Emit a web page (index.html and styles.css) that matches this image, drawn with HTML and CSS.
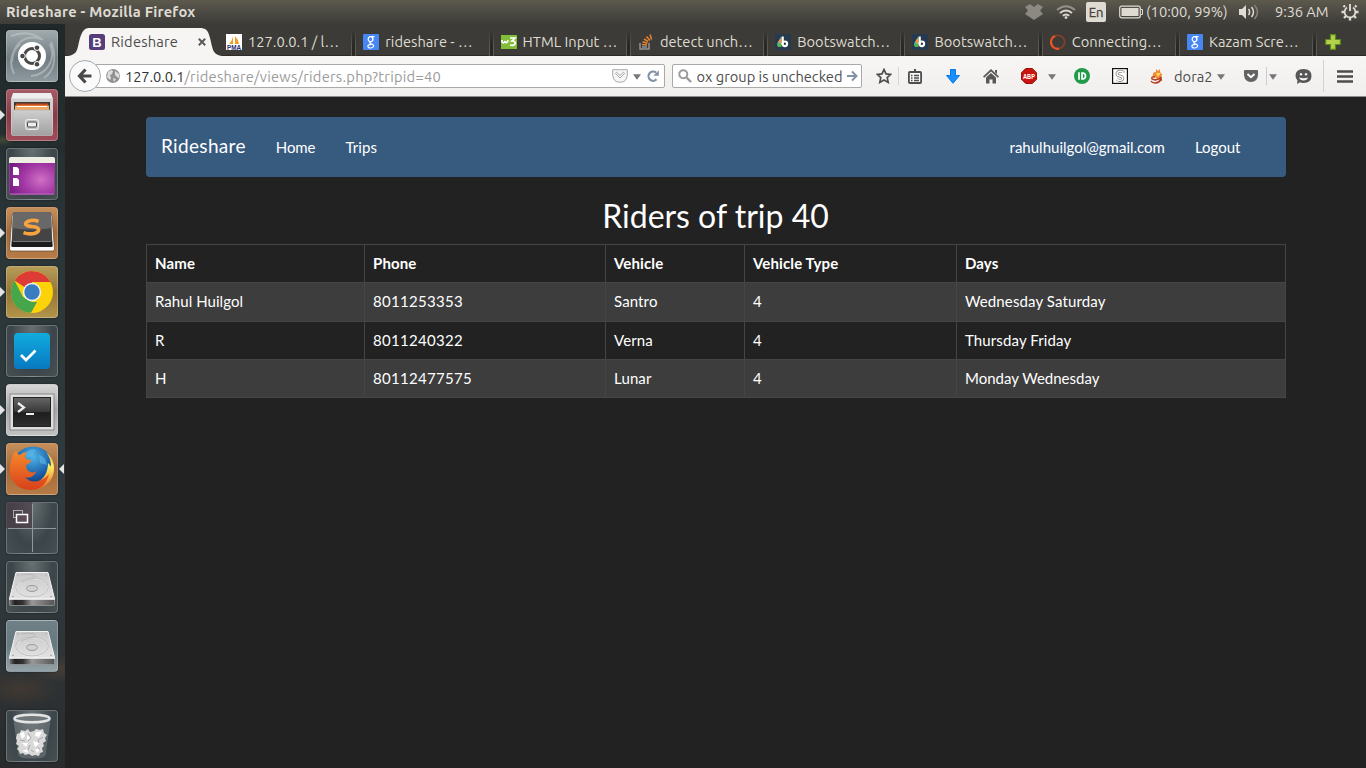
FILE: index.html
```html
<!DOCTYPE html>
<html lang="en">
<head>
<meta charset="utf-8">
<title>Rideshare</title>
<link rel="stylesheet" href="styles.css">
</head>
<body>
<svg class="defs" width="0" height="0" aria-hidden="true">
  <defs>
    <linearGradient id="silver" x2="0" y2="1"><stop offset="0" stop-color="#cfcfcf"/><stop offset="1" stop-color="#a0a0a0"/></linearGradient>
    <linearGradient id="plate" x2="0" y2="1"><stop offset="0" stop-color="#c9c9c9"/><stop offset="1" stop-color="#e2e2e2"/></linearGradient>
    <linearGradient id="ink" x2="0" y2="1"><stop offset="0" stop-color="#666"/><stop offset=".5" stop-color="#383838"/><stop offset=".52" stop-color="#1d1d1d"/><stop offset="1" stop-color="#303030"/></linearGradient>
    <linearGradient id="edge"><stop offset="0" stop-color="#777"/><stop offset=".12" stop-color="#222"/><stop offset=".3" stop-color="#333"/><stop offset=".5" stop-color="#999"/><stop offset="1" stop-color="#555"/></linearGradient>
    <radialGradient id="purple" cx=".7" cy=".6" r=".8"><stop offset="0" stop-color="#cf6fc4"/><stop offset=".5" stop-color="#a338a5"/><stop offset="1" stop-color="#711a80"/></radialGradient>
    <radialGradient id="globe" cx=".5" cy=".25" r=".75"><stop offset="0" stop-color="#4fb5e8"/><stop offset=".6" stop-color="#1b5fa8"/><stop offset="1" stop-color="#0b2f69"/></radialGradient>
    <linearGradient id="flame" x2="0" y2="1"><stop offset="0" stop-color="#f58a2c"/><stop offset="1" stop-color="#d8401b"/></linearGradient>
    <linearGradient id="tail" x2="0" y2="1"><stop offset="0" stop-color="#f7b53b"/><stop offset=".4" stop-color="#fdec62"/><stop offset="1" stop-color="#e8641f"/></linearGradient>
    <linearGradient id="tick" x2="0" y2="1"><stop offset="0" stop-color="#11acdf"/><stop offset="1" stop-color="#0878c0"/></linearGradient>
    <symbol id="google" viewBox="0 0 16 16"><rect width="16" height="16" rx="1" fill="#4787f3"/><g fill="none" stroke="#fff" stroke-width="1.200"><ellipse cx="7.500" cy="5.200" rx="2.300" ry="2.500"/><path d="M8 2.600h3.500M9.700 3.500v3.300M7.300 7.800q-1.200 1 .5 1.700 3 1 2.800 2.500-.4 2-3.200 2-2.600 0-2.500-1.900.2-1.700 3.400-1.800"/></g></symbol>
    <symbol id="swatch" viewBox="0 0 16 16"><rect width="16" height="16" fill="#25394f"/><path d="M6 3v9H4Q2 12 2 9.500z" fill="#39b5d8"/><path d="M6.500 3v8L3 8z" fill="#f29a37"/><path d="M2 10l4.500-1v4H4q-2 0-2-3" fill="#55b949"/><path d="M7.700 2.500v7.500" stroke="#fff" stroke-width="2.200"/><circle cx="9.800" cy="9.800" r="2.300" fill="none" stroke="#fff" stroke-width="2.200"/></symbol>
    <symbol id="drive" viewBox="0 0 52 52"><path d="M10 11.500h32l6.500 26h-45z" fill="url(#plate)" stroke="#f2f2f2"/><path d="M3.500 38h45v5.500q0 1-1 1h-43q-1 0-1-1z" fill="url(#edge)" stroke="#999" stroke-width=".8"/><path d="M3 38h46" stroke="#f8f8f8" stroke-width="1.400"/><ellipse cx="26" cy="27" rx="16.500" ry="9.500" fill="none" stroke="#f0f0f0"/><ellipse cx="26" cy="26.500" rx="16.500" ry="9.500" fill="none" stroke="#b8b8b8" stroke-width=".8"/><path d="M15 14q13-2 14 1c0 3-9 3-14 6" fill="none" stroke="#b8b8b8"/><ellipse cx="26" cy="27.500" rx="5.500" ry="3" fill="#d2d2d2" stroke="#999"/><g fill="#999"><circle cx="7" cy="35.500" r=".8"/><circle cx="45" cy="35.500" r=".8"/><circle cx="12" cy="14" r=".6"/><circle cx="40" cy="14" r=".6"/></g></symbol>
    <symbol id="caret" viewBox="0 0 8 6"><path d="M0 .3h8L4 5.700z" fill="#777"/></symbol>
  </defs>
</svg>

<div class="desktop">
  <header class="panel">
    <span class="window-title">Rideshare - Mozilla Firefox</span>
    <div class="indicators">
      <svg class="dropbox" width="18" height="16" viewBox="0 0 18 16"><path d="M5 0 9 3l4-3 5 3-3 3.500L18 10l-3 2-6 4-6-4-3-2 3-3.500L0 3z" fill="#8b8982"/></svg>
      <svg class="wifi" width="20" height="14" viewBox="0 0 20 14"><g fill="none" stroke="#dfdbd2" stroke-width="1.900"><path d="M1 5Q10-2.600 19 5" stroke="#918f86"/><path d="M4 8q6-5 12 0"/><path d="M6.800 10.800q3.200-2.600 6.400 0"/></g><circle cx="10" cy="12.600" r="1.400" fill="#dfdbd2"/></svg>
      <span class="lang">En</span>
      <svg class="battery" width="24" height="14" viewBox="0 0 24 14"><rect x=".7" y="1.200" width="20.600" height="11.600" rx="2" fill="none" stroke="#dfdbd2" stroke-width="1.200"/><rect x="2.500" y="3" width="17" height="8" fill="#dfdbd2"/><path d="M22 4.500h1.500v5H22" fill="none" stroke="#dfdbd2"/></svg>
      <span class="charge">(10:00, 99%)</span>
      <svg class="volume" width="20" height="16" viewBox="0 0 20 16"><path d="M0 5h3l4-4v14l-4-4H0z" fill="#dfdbd2"/><g fill="none" stroke="#dfdbd2" stroke-width="1.500"><path d="M9.500 5q2.200 3 0 6M12.500 3q4 5 0 10"/><path d="M15.500 1q6 7 0 14" stroke="#85837a"/></g></svg>
      <span class="clock">9:36 AM</span>
      <svg class="gear" width="18" height="18" viewBox="-9 -9 18 18"><g fill="none" stroke="#dfdbd2"><path d="M-3-4.500A5.400 5.400 0 1 0 3-4.500" stroke-width="1.800"/><path d="M0-8V-1" stroke-width="1.900"/><path d="M-5-5-6.500-6.500M5-5 6.500-6.500M-5.500 0H-8.500M5.500 0h3M-4 4-6 6M4 4 6 6M0 5.500V8.500" stroke-width="2.400"/></g></svg>
    </div>
  </header>

  <aside class="dock">
    <div class="tile ash"><svg viewBox="0 0 52 52"><g fill="none" stroke="#c4cacc" stroke-width="2" opacity=".55"><path d="M6 32C7 12 20 4 35 9M44 14c7 16-4 31-19 32M5 6q18-7 32 4M45 12c7 17 2 30-7 36M8 44Q0 27 14 14"/></g><circle cx="26" cy="26" r="14" fill="#fff"/><circle cx="26" cy="26" r="7.500" fill="none" stroke="#46484a" stroke-width="3"/><g fill="#46484a" stroke="#fff"><circle cx="16.500" cy="26" r="2.800"/><circle cx="31" cy="17.700" r="2.800"/><circle cx="31" cy="34.300" r="2.800"/></g></svg></div>
    <div class="tile red running"><svg viewBox="0 0 52 52"><path d="M7 4h38l2 6H5z" fill="#eee"/><path d="M5 9.500h42V45H5z" fill="#cfcfcf"/><path d="M8 13h36v9H8z" fill="#3f3836"/><path d="M10 14.500h32v3H10z" fill="#c94b1c"/><path d="M9 16.500h34V21H9z" fill="#f3a861"/><path d="M11 17.500h30" stroke="#fff"/><path d="M7 21h38l1.500 24q0 1.500-1.500 1.500H7Q5.500 46.500 5.500 45z" fill="url(#silver)" stroke="#b5b5b5" stroke-width=".8"/><rect x="19.500" y="30.500" width="13" height="10" rx="2" fill="#c5c5c5" stroke="#ececec"/><rect x="21.500" y="33" width="9" height="5" rx="1" fill="#eee" stroke="#444"/></svg></div>
    <div class="tile dark"><svg viewBox="0 0 52 52"><rect x="3.500" y="9.500" width="45" height="37" rx="2" fill="url(#purple)" stroke="#8c3e97"/><path d="M3 11q0-2 2-2h42q2 0 2 2v4H3z" fill="#efeee3"/><path d="M7 19h4l2 2v6H7zM7 30h4l2 2v6H7z" fill="#fff"/><path d="M4 46h44" stroke="#b66fbe"/></svg></div>
    <div class="tile copper running"><svg viewBox="0 0 52 52"><path d="M8 6h36q1.500 0 2 3l2.500 33q0 2-2 2h-41q-2 0-2-2L6 9q.5-3 2-3" fill="#fafafa" stroke="#61452e" stroke-width=".7"/><path d="M9 5h34q2 0 2 2l1.500 32q0 1-1.500 1H7q-1.500 0-1.500-1L7 7q0-2 2-2" fill="#444"/><path d="M9 5h34q2 0 2 2l.7 14q-19 3-39.400 0L7 7q0-2 2-2" fill="#686868"/><path d="M6 34h40l.5 5q0 1-1.500 1H7q-1.500 0-1.500-1z" fill="#1c1c1c"/><path d="M7 34.500h38" stroke="#777"/><path d="M32.500 14.500q-5-2.300-10-.3c-5 2.300-3.500 4.500 3.500 5.300 8 .7 8.500 4.500 3 6.800q-5.500 1.500-11.500-.7" fill="none" stroke="#f9a33f" stroke-width="3.600"/></svg></div>
    <div class="tile gold running"><svg viewBox="0 0 52 52"><circle cx="26" cy="26" r="21" fill="#fcd209"/><path d="M26 26 8.500 14.500A21 21 0 0 1 44.400 16H26z" fill="#dc3c35"/><path d="M8.500 14.500 17 31 26 36l-2 11A21 21 0 0 1 8.500 14.500" fill="#45a64b"/><path d="M17 31Q20 37 26 36h5L25 47 15 33z" fill="#45a64b"/><circle cx="26" cy="26" r="9.200" fill="#eef3f8"/><circle cx="26" cy="26" r="7.700" fill="#397cc0"/></svg></div>
    <div class="tile dark"><svg viewBox="0 0 52 52"><rect x="8" y="8" width="36" height="36" rx="4" fill="url(#tick)"/><path d="m15 30 5 5 9.500-9.500" fill="none" stroke="#fff" stroke-width="2.700"/></svg></div>
    <div class="tile pale running"><svg viewBox="0 0 52 52"><path d="M4 10h44v36H4z" fill="#dedede" stroke="#888"/><rect x="7.500" y="13.500" width="37" height="29" fill="url(#ink)" stroke="#222"/><path d="m12 19 6 4.500-6 4.500M20 30h8" fill="none" stroke="#eee" stroke-width="2.200"/></svg></div>
    <div class="tile copper running focused"><svg viewBox="0 0 52 52"><circle cx="27" cy="24" r="20.500" fill="url(#globe)"/><path d="M20 9q6-4 10-2l-3 5-7 3zM33 12q7 2 8 10l-7-2z" fill="#62c0e9" opacity=".55"/><path d="M40 9c12 9 11 29-5 36-13 4-20-3-20-3 20 1 27-10 27-22q2 2 3 4 0-9-5-15" fill="url(#tail)"/><path d="M6 15q1-5 4-7 1 3 4 4 3-3 7-3-3 4-1 7l5 1q0 3-5 5 0 5 4 7c4 1 5 0 7-1l-3 4q-4 4-9 2 7 8 18 2 4-2 6-5Q39 47 24 47 8 46 4 31 3 22 6 15" fill="url(#flame)"/></svg></div>
    <div class="tile dark"><svg viewBox="0 0 52 52"><path d="M0 0h26v26H0z" fill="#4d3d48" opacity=".7"/><path d="M26.500 2v48M2 26.500h48" stroke="#92999b"/><rect x="7.500" y="8.500" width="9" height="7" fill="none" stroke="#aaa"/><rect x="10.500" y="12.500" width="11" height="8" fill="#5d4c58" stroke="#fff" stroke-width="1.500"/></svg></div>
    <div class="tile dark"><svg><use href="#drive"/></svg></div>
    <div class="tile steel"><svg><use href="#drive"/></svg></div>
    <div class="tile dark trash"><svg viewBox="0 0 52 52"><path d="M8 9h36l-5 36q-1 3-13 3t-13-3z" fill="#a0a7aa" opacity=".3" stroke="#bbb"/><path d="m11 24 3-1 1-3 4 1 3-2 2 3 4-1 2-2 4 1 3-1 1 4 3 2-2 3 1 3-3 2 1 3-2 2 1 4-3 1-1 3-4-1-3 1-3-2-4 1-2-2-3 1-1-3-2-2 2-3-3-2 1-3-1-3z" fill="#d9d9d9"/><path d="m14 23 4-1 1 4-3 3zM30 22l6 0-3 5-4-1zM16 33l6 0-2 4zM27 31l7 2-5 4zM16 41l5-2 1 4zM29 39l6 0-4 4zM21 25l4 3-4 2z" fill="#fff"/><path d="m22 23 3 5-3 3M37 27l-5 3 1 3M24 35l-2 5M32 37l2 3M14 30l5 1M25 40l3 2" stroke="#aaa" fill="none"/><ellipse cx="26" cy="8.500" rx="17.500" ry="3.800" fill="#70777a" stroke="#e4e4e4" stroke-width="2.500"/></svg></div>
  </aside>

  <div class="browser">
    <nav class="tabs">
      <div class="tab active">
        <svg class="tab-shape" width="152" height="32" viewBox="0 0 152 32"><path d="M0 32C14 32 12 24 15 14 18 5 20 4 26 4H134C141 4 143 6 145 14 148 25 147 32 160 32z" fill="#f6f5f4"/></svg>
        <svg class="fav" viewBox="0 0 16 16"><rect width="16" height="16" rx="2.500" fill="#563d7c"/><text x="8" y="12.800" class="fav-b">B</text></svg>
        <span>Rideshare</span>
        <svg class="close" width="8" height="8" viewBox="0 0 8 8"><path d="m.8.8 6.400 6.400M7.200.8.8 7.200" stroke="#5b5b5b" stroke-width="2"/></svg>
      </div>
      <div class="tab"><svg class="fav" viewBox="0 0 16 16"><path fill="#fff" d="M0 0h16v16H0z"/><path d="M3 10Q7 6 7 1v9zM9 10V2q3 3 4 8z" fill="#f39b1f"/><text x="8" y="15.500" class="pma" textLength="14" lengthAdjust="spacingAndGlyphs">PMA</text></svg><span>127.0.0.1 / l…</span></div>
      <div class="tab"><svg class="fav"><use href="#google"/></svg><span>rideshare - …</span></div>
      <div class="tab"><svg class="fav" viewBox="0 0 16 16"><path fill="#82bd3a" d="M0 1h16v14H0z"/><path d="M1 6v2q2 2 3-1v1q2 2 3-2M9 4h5l-3 3q4 0 3 3-1 2-5 1" fill="none" stroke="#fff" stroke-width="1.700"/></svg><span>HTML Input …</span></div>
      <div class="tab"><svg class="fav" viewBox="0 0 16 16"><path d="M2 9v6h9V9M4 13h5" fill="none" stroke="#929497" stroke-width="1.500"/><path d="m4 10.500 5 .6M4.600 7.800l4.800 1.500M6 5l4.300 2.700M8.500 2.500 12 6.500M12 .5l1.600 5" stroke="#e98530" stroke-width="1.500"/></svg><span>detect unch…</span></div>
      <div class="tab"><svg class="fav"><use href="#swatch"/></svg><span>Bootswatch…</span></div>
      <div class="tab"><svg class="fav"><use href="#swatch"/></svg><span>Bootswatch…</span></div>
      <div class="tab"><svg class="fav" viewBox="0 0 16 16"><circle cx="8" cy="8" r="6.700" fill="none" stroke="#80402c" stroke-width="1.800"/><path d="M5 2A6.700 6.700 0 0 0 9 14.700" fill="none" stroke="#ed5526" stroke-width="2.200"/></svg><span>Connecting…</span></div>
      <div class="tab"><svg class="fav"><use href="#google"/></svg><span>Kazam Scre…</span></div>
      <div class="new-tab"><svg width="16" height="16" viewBox="0 0 16 16"><path d="M5.500.7h5v4.800h4.800v5h-4.800v4.800h-5v-4.800H.7v-5h4.800z" fill="#b3d24a" stroke="#5e8a1b" stroke-width="1.200"/></svg></div>
    </nav>

    <div class="toolbar">
      <button class="back" aria-label="Back"><svg width="16" height="16" viewBox="0 0 16 16"><path d="M8.500 1.500 2.500 8l6 6.500M3 8h11.500" fill="none" stroke="#4a4a4a" stroke-width="3.200"/></svg></button>
      <div class="field address">
        <svg width="14" height="14" viewBox="0 0 14 14"><circle cx="7" cy="7" r="6.900" fill="#929292"/><path d="m2 3 3-2 2 1-1 3-2 1 1 3-1 2-3-3zM9 2l4 3v4l-2-1-2-2zM7 9l3 1-2 3z" fill="#dedede"/></svg>
        <span class="url"><b>127.0.0.1</b>/rideshare/views/riders.php?tripid=40</span>
        <svg class="save" width="16" height="14" viewBox="0 0 16 14"><path d="M.7.7h14.600v5Q15 13.300 8 13.300T.7 5.700z" fill="#f5f5f5" stroke="#aaa"/><path d="m3.500 4.300 1-1L8 6.500l3.500-3.200 1 1.200L8 9z" fill="#fff" stroke="#a5a5a5"/></svg>
        <svg class="drop" width="8" height="6"><use href="#caret"/></svg>
        <svg class="reload" width="12" height="12" viewBox="0 0 12 12"><path d="M9.500 9.300A4.600 4.600 0 1 1 9 2.600" fill="none" stroke="#8291a3" stroke-width="2.200"/><path d="M11.800.2v5.500H6.300z" fill="#8291a3"/></svg>
      </div>
      <div class="field search">
        <svg width="14" height="14" viewBox="0 0 14 14"><circle cx="5.300" cy="5.300" r="4" fill="none" stroke="#9a9a9a" stroke-width="2"/><path d="m8.500 8.500 4.500 4.500" stroke="#9a9a9a" stroke-width="2.400"/></svg>
        <span class="query"><span>ox group is unchecked</span></span>
        <svg width="11" height="12" viewBox="0 0 11 12"><path d="M0 6h9M5 1.500 9.500 6 5 10.500" fill="none" stroke="#8291a3" stroke-width="2"/></svg>
      </div>
      <div class="tools">
        <i class="slot star"><svg width="16" height="16" viewBox="0 0 16 16"><path d="m8 1.500 2 4.400 4.700.5-3.500 3.200 1 4.800L8 12l-4.200 2.400 1-4.800L1.300 6.400 6 5.900z" fill="none" stroke="#4d4d4d" stroke-width="1.700"/></svg></i>
        <i class="slot list"><svg width="14" height="15" viewBox="0 0 14 15"><rect x=".9" y="3" width="12.200" height="11" rx="1" fill="#f8f8f8" stroke="#4d4d4d" stroke-width="1.800"/><path d="M4 4V2h2V0h2v2h2v2z" fill="#4d4d4d"/><path d="M3 6.500h1.500M6 6.500h5M3 9h1.500M6 9h5M3 11.500h1.500M6 11.500h5" stroke="#4d4d4d" stroke-width="1.300"/></svg></i>
        <i class="slot download"><svg width="14" height="15" viewBox="0 0 14 15"><path d="M4.500.5h5v6h4L7 14.300.5 6.500h4z" fill="#1690ff" stroke="#0879e2"/></svg></i>
        <i class="slot home"><svg width="16" height="15" viewBox="0 0 16 15"><path d="M0 7.500 8 0l8 7.500-1.200 1.300L8 2.500 1.200 8.800zM3 8.500l5-4.600 5 4.600V14.500H9.500v-4h-3v4H3zM12 1h2v4l-2-1.800z" fill="#585858"/></svg></i>
        <i class="slot abp"><svg width="16" height="16" viewBox="0 0 16 16"><path d="M4.700.5h6.600l4.200 4.200v6.600l-4.200 4.200H4.700L.5 11.300V4.700z" fill="#c9150f" stroke="#a3100c"/><text x="8" y="10.700" class="abp-text" textLength="12" lengthAdjust="spacingAndGlyphs">ABP</text></svg></i>
        <i class="slot tri"><svg width="8" height="6"><use href="#caret"/></svg></i>
        <i class="slot green"><svg width="16" height="16" viewBox="0 0 16 16"><circle cx="8" cy="8" r="8" fill="#209a48"/><path d="M5 4.300v7.400M8 5.100h1.300q2.200.3 2.200 2.900t-2.200 2.900H8z" fill="none" stroke="#fff" stroke-width="1.700"/></svg></i>
        <i class="slot scribe"><svg width="16" height="16" viewBox="0 0 16 16"><rect x=".6" y=".6" width="14.800" height="14.800" fill="#fff" stroke="#111" stroke-width="1.200"/><path d="M11 5V4Q8 2.500 6 4T6 7.500l4 1.300q1.700 1.700-.3 3.200-2 1-5-.5" fill="none" stroke="#888" stroke-width="3"/><path d="M11 5V4Q8 2.500 6 4T6 7.500l4 1.300q1.700 1.700-.3 3.200-2 1-5-.5" fill="none" stroke="#fff" stroke-width="1.400"/></svg></i>
        <i class="slot firebug"><svg width="14" height="16" viewBox="0 0 14 16"><path d="M3 8Q2 4 6 4V1l2 2 2-2v3l2 2q0 4-4 5z" fill="#f08b31"/><path d="M5 9Q1 8 2 11l3 1q4-1 6-2-1 5-6 5Q2 15 1 13M10 9q2 2 1 4" fill="none" stroke="#b83c1b" stroke-width="1.500"/><path d="M6 5h5L8 9z" fill="#fed66b"/></svg></i>
        <span class="profile">dora2</span>
        <i class="slot tri"><svg width="8" height="6"><use href="#caret"/></svg></i>
        <i class="slot pocket"><svg width="14" height="12" viewBox="0 0 14 12"><path d="M1 0h12q1 0 1 1v4q-.5 7-7 7T0 5V1q0-1 1-1" fill="#636363"/><path d="m3.500 4 3.500 3.300L10.500 4" fill="none" stroke="#fff" stroke-width="1.900"/></svg></i>
        <i class="slot tri ruled"><svg width="8" height="6"><use href="#caret"/></svg></i>
        <i class="slot chat"><svg width="17" height="15" viewBox="0 0 17 15"><path d="M8.500 0q8 0 8 7t-8 7Q6 14 5 13.300L2 15l.5-3.500Q.5 9.500.5 7q0-7 8-7" fill="#565656"/><path d="M4 8.500q4.500 1.500 9 0-1 3-4.500 3T4 8.500" fill="#f4f4f4"/><circle cx="6" cy="5.300" r="1.200" fill="#f4f4f4"/><circle cx="11" cy="5.300" r="1.200" fill="#f4f4f4"/></svg></i>
        <i class="slot menu"><svg width="16" height="13" viewBox="0 0 16 13"><path d="M0 1.500h16M0 6.500h16M0 11.500h16" stroke="#4d4d4d" stroke-width="2.400"/></svg></i>
      </div>
    </div>

    <main class="page">
      <div class="container">
        <nav class="navbar">
          <a class="brand">Rideshare</a><a class="home-link">Home</a><a class="trips">Trips</a>
          <a class="user">rahulhuilgol@gmail.com</a><a>Logout</a>
        </nav>
        <h2>Riders of trip 40</h2>
        <table>
          <colgroup><col class="c-name"><col class="c-phone"><col class="c-vehicle"><col class="c-type"><col></colgroup>
          <thead><tr><th>Name</th><th>Phone</th><th>Vehicle</th><th>Vehicle Type</th><th>Days</th></tr></thead>
          <tbody>
            <tr class="tall"><td>Rahul Huilgol</td><td>8011253353</td><td>Santro</td><td>4</td><td>Wednesday Saturday</td></tr>
            <tr><td>R</td><td>8011240322</td><td>Verna</td><td>4</td><td>Thursday Friday</td></tr>
            <tr><td>H</td><td>80112477575</td><td>Lunar</td><td>4</td><td class="snug">Monday Wednesday</td></tr>
          </tbody>
        </table>
      </div>
    </main>
  </div>
</div>
</body>
</html>
```

FILE: styles.css
```css
* { box-sizing: border-box; }
body { margin: 0; background: #222; overflow: hidden; font-family: "Ubuntu", "Noto Sans", sans-serif; font-size: 14.67px; }
svg { display: block; flex: none; }
.defs { position: absolute; }
.desktop { display: grid; grid-template: 24px 744px / 65px 1301px; width: 1366px; height: 768px; }

/* top panel */
.panel { grid-column: 1 / 3; display: flex; align-items: center; justify-content: space-between; padding: 0 7px 0 6px; background: linear-gradient(#5d594d, #4f4d46 40%, #3d3c38); color: #dfdbd2; }
.window-title { font-weight: bold; letter-spacing: .24px; padding-bottom: 2px; }
.indicators { display: flex; align-items: center; height: 24px; }
.wifi { margin-left: 13px; }
.lang { width: 20px; height: 20px; margin: 0 1px 0 10px; border-radius: 2px; background: #dfdbd2; color: #44423d; text-align: center; line-height: 20px; font-size: 13px; -webkit-text-stroke: .3px #44423d; }
.battery { margin-left: 12px; }
.charge { width: 82px; margin-left: 3px; padding-bottom: 2px; white-space: nowrap; }
.volume { margin-left: 11px; }
.clock { width: 55px; margin-left: 16px; padding-bottom: 2px; white-space: nowrap; letter-spacing: -.1px; }
.gear { margin-left: 11px; }

/* launcher */
.dock { display: flex; flex-direction: column; gap: 7px; padding: 6px 0 0 6px;
  background:
    radial-gradient(ellipse 12px 6px at 3px 116px, #5b603a88, transparent),
    radial-gradient(ellipse 30px 12px at 55px 125px, #232a2aaa, transparent),
    radial-gradient(ellipse 40px 18px at 20px 665px, #4b3c31aa, transparent),
    radial-gradient(ellipse 30px 14px at 60px 645px, #504238aa, transparent),
    linear-gradient(#202829, #2b3638 30%, #303b40 70%, #2f3436 85%, #292b2c); }
.tile { position: relative; width: 52px; height: 52px; border-radius: 4px; border: 1px solid #ffffff38; box-shadow: 0 0 2px #0008; }
.tile svg { width: 52px; height: 52px; margin: -1px; }
.ash { background: linear-gradient(#a0aaad, #6f7c81 55%, #8d999e); }
.red { background: linear-gradient(#a35d66, #873b47 50%, #a04b58); }
.dark { background: radial-gradient(ellipse at 50% 0, #687073, #3c464a 60%, #465053); }
.copper { background: linear-gradient(#c58f5b, #a26a3b 50%, #b67c47); }
.gold { background: linear-gradient(#b79b59, #947637 50%, #b29349); }
.pale { background: linear-gradient(#d6d6d6, #a6a6a6 50%, #c2c2c2); }
.steel { background: linear-gradient(#6f8087, #677980 50%, #95a3a8); }
.trash { margin-top: 31px; }
.running::before, .focused::after { content: ""; position: absolute; top: 20px; border: 5px solid transparent; }
.running::before { left: -7px; border-left-color: #e4e4e4; border-right: 0; }
.focused::after { right: -7px; border-right-color: #e4e4e4; border-left: 0; }

/* tab strip */
.browser { display: flex; flex-direction: column; min-width: 0; }
.tabs { display: flex; height: 32px; background: #3c3b37; box-shadow: inset 0 -1px #2c2b28; }
.tab { position: relative; display: flex; align-items: center; gap: 6px; width: 137.3px; padding: 4px 0 0 9px; color: #dfdbd2; white-space: nowrap; }
.tab > span { padding-bottom: 2px; }
.tab:not(.active)::after { content: ""; position: absolute; right: -2px; top: 6px; width: 3px; height: 26px; border: solid #5b5a53; border-width: 0 1px; background: #292825; mask: linear-gradient(transparent, #000 60%); }
.active { width: 152px; padding-left: 24px; color: #4c4c4c; }
.active > span { letter-spacing: .2px; width: 67px; }
.tab-shape { position: absolute; left: 0; top: 0; overflow: visible; }
.active > :not(.tab-shape) { position: relative; }
.fav { width: 16px; height: 16px; }
.fav-b { font: bold 13px "Liberation Sans", sans-serif; fill: #fff; text-anchor: middle; }
.pma { font: bold 7px "Liberation Sans", sans-serif; fill: #292f73; text-anchor: middle; }
.close { margin-left: 14px; }
.new-tab { padding: 10px 0 0 10px; }

/* navigation bar */
.toolbar { display: flex; align-items: center; height: 41px; padding-left: 4px; background: linear-gradient(#f7f6f5, #f0efed); border-bottom: 1px solid #8e8c87; color: #4c4c4c; }
.back { position: relative; z-index: 1; display: flex; align-items: center; justify-content: center; width: 32px; height: 32px; padding: 0; border: 1px solid #a3abb5; border-radius: 50%; background: #fafafa; }
.field { display: flex; align-items: center; height: 24px; border: 1px solid #aaa9a5; border-radius: 2px; background: #fff; }
.address { width: 570px; margin-left: -6px; padding: 0 5px 0 10px; }
.url { margin-left: 5px; color: #9b9b9b; white-space: nowrap; letter-spacing: .26px; }
.url b { font-weight: normal; color: #333; letter-spacing: -.1px; }
.save { margin-left: auto; }
.drop { margin: 2px 6px 0 5px; }
.search { width: 190px; margin-left: 7px; padding: 0 3px 0 5px; justify-content: space-between; color: #4c4c4c; }
.query { display: flex; justify-content: flex-end; width: 146px; margin: 0 4px 0 4px; overflow: hidden; white-space: nowrap; }
.tools { display: flex; align-items: center; height: 40px; margin-left: 8px; }
.slot { display: flex; align-items: center; justify-content: center; height: 24px; flex: none; }
.star { width: 28px; }
.list { width: 34px; padding-right: 2px; border-left: 1px solid #d5d5d5; height: 18px; }
.download { width: 42px; }
.home { width: 34px; }
.abp { width: 34px; margin-left: 4px; }
.abp-text { font: bold 7px "Liberation Sans", sans-serif; fill: #fff; text-anchor: middle; }
.tri { width: 12px; padding-top: 2px; }
.green { width: 38px; margin-left: 5px; }
.scribe { width: 38px; }
.firebug { width: 35px; }
.profile { width: 41px; }
.pocket { width: 30px; margin-left: 9px; }
.ruled { width: 13px; border-left: 1px solid #c5ccd3; height: 18px; }
.chat { width: 36px; margin-left: 6px; }
.menu { width: 43px; height: 32px; margin-left: 2px; border-left: 1px solid #cfd3d7; }

/* page */
.page { flex: 1; padding-top: 20px; background: #222; color: #fff; font: 15px/21px Lato, sans-serif; }
.container { width: 1140px; margin-left: 81px; }
.navbar { display: flex; align-items: center; height: 60px; padding-right: 30.5px; border-radius: 4px; background: #375a7f; }
.navbar a { padding: 0 15px; }
.navbar .brand { font-size: 19px; padding-bottom: 3px; letter-spacing: .33px; }
.navbar .home-link { letter-spacing: -.1px; }
.navbar .trips { letter-spacing: .1px; }
.navbar .user { margin-left: auto; }
h2 { margin: 20px 0 10px -1px; height: 37px; font-size: 32px; line-height: 37px; font-weight: normal; text-align: center; }
table { width: 1140px; table-layout: fixed; border-collapse: collapse; }
.c-name { width: 218px; }
.c-phone { width: 241px; }
.c-vehicle { width: 139px; }
.c-type { width: 212px; }
tr { height: 38px; }
.tall { height: 39px; }
th, td { padding: 8px; line-height: 21px; border: 1px solid #464545; text-align: left; letter-spacing: .12px; }
td:first-child { letter-spacing: .05px; }
td:nth-child(2) { letter-spacing: .3px; }
td.snug { letter-spacing: 0; }
.tall td { padding: 7px 8px 9px; }
tbody tr:nth-child(odd) { background: #3d3d3d; }
```
